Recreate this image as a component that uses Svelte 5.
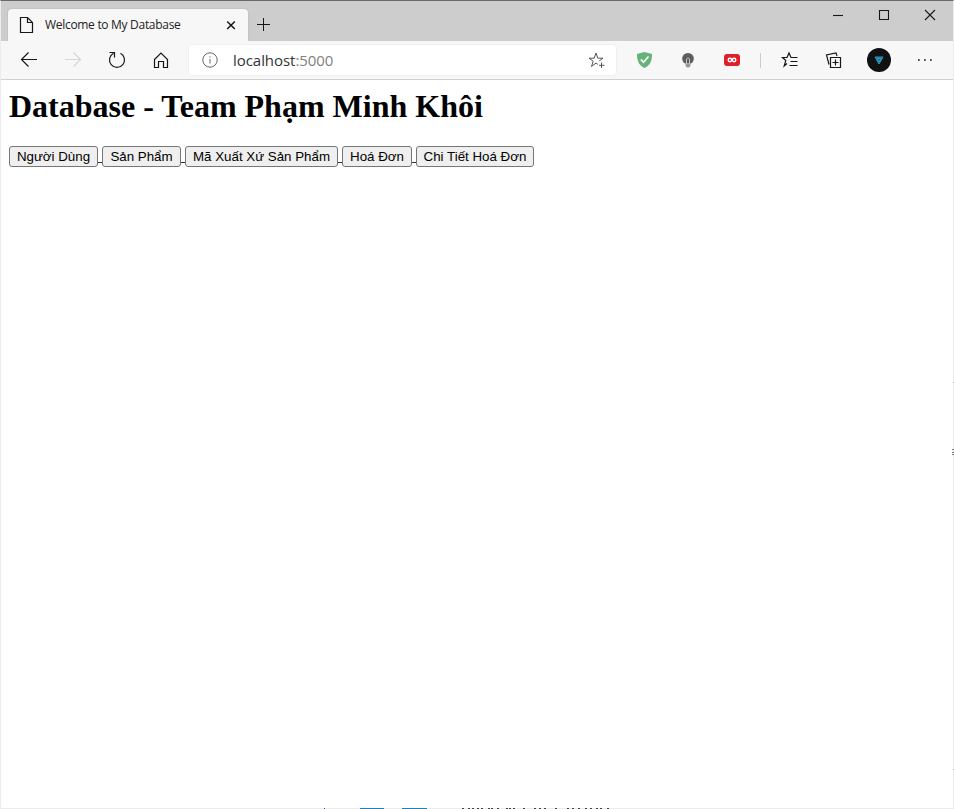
<script>
  const links = [
    { label: 'Người Dùng', width: 89 },
    { label: 'Sản Phẩm', width: 79 },
    { label: 'Mã Xuất Xứ Sản Phẩm', width: 153 },
    { label: 'Hoá Đơn', width: 70 },
    { label: 'Chi Tiết Hoá Đơn', width: 118 }
  ];
  const dashes = [152, 158, 162, 167, 171, 178, 181, 187, 196, 199, 203, 213, 224, 229, 234, 245, 257, 262, 268, 275, 280, 286, 290, 297];
</script>

<div class="window">
  <header class="titlebar">
    <div class="tab">
      <svg class="doc" width="16" height="18" viewBox="0 0 16 18"><path d="M2.5 1.5H9.5L14.5 6.5V16.5H2.5ZM9.5 1.5V6.5H14.5" /></svg>
      <span class="tabname">Welcome to My Database</span>
      <svg class="tabclose" width="10" height="10" viewBox="0 0 10 10"><path d="M1.200 1.500L8.800 9M8.800 1.500L1.200 9" /></svg>
    </div>
    <svg class="plus" width="14" height="14" viewBox="0 0 14 14"><path d="M6.500 0V13M0 6.500H13" /></svg>
    <div class="controls">
      <svg width="46" height="30" viewBox="0 0 46 30"><path d="M18 14.5H28" /></svg>
      <svg width="46" height="30" viewBox="0 0 46 30"><path d="M18.500 9.500H27.500V18.500H18.500Z" /></svg>
      <svg width="46" height="30" viewBox="0 0 46 30"><path d="M18 9L28 19M28 9L18 19" /></svg>
    </div>
  </header>

  <nav class="toolbar">
    <svg class="cell" width="44" height="38" viewBox="0 0 44 38"><path d="M30 18.500H14.500M21.500 11.500L14.500 18.500L21.500 25.500" /></svg>
    <svg class="cell faded" width="44" height="38" viewBox="0 0 44 38"><path d="M14 18.500H29.500M22.500 11.500L29.500 18.500L22.500 25.500" /></svg>
    <svg class="cell" width="44" height="38" viewBox="0 0 44 38"><path d="M25.500 12.300A7.500 7.500 0 1 1 18.500 12.300M14.500 11.500H19.500V16.500" /></svg>
    <svg class="cell" width="44" height="38" viewBox="0 0 44 38"><path d="M15.500 18.500L22 12L28.500 18.500V26.500H24.500V20.500H19.500V26.500H15.500Z" /></svg>
    <div class="address">
      <svg class="info" width="16" height="16" viewBox="0 0 16 16"><circle cx="8" cy="8" r="7.200" /><path d="M8 7V11.500M8 4.300V5.500" /></svg>
      <span class="url">localhost<span>:5000</span></span>
      <svg class="star" width="18" height="18" viewBox="0 0 18 18"><path d="M11 13.500L9 12L4.500 15.500L6.200 10.200L2 7.200H7.200L9 2L10.800 7.200H16L12.200 10M14.500 11.500V17M12 14.300H17.500" /></svg>
    </div>
    <svg class="cell ext" width="44" height="38" viewBox="0 0 44 38"><path fill="#67b279" d="M22.500 11L30 13C30.100 20 28 24.500 22.500 27C17 24.500 14.900 20 15 13Z" /><path stroke="#fff" stroke-width="1.700" d="M18.800 18.500L21.500 21.200L26.500 15.500" /></svg>
    <svg class="cell ext" width="44" height="38" viewBox="0 0 44 38"><path fill="#5d5d5d" d="M19 22.500C14.700 20.500 15 12.200 22 12C29 12.200 29.300 20.500 25 22.500Z" /><path fill="#999" d="M19.500 22H24.500V25L23 26.500H21L19.500 25Z" /><path stroke="#ddd" stroke-width=".8" d="M20.500 23V18Q22 15.500 23.500 18V23" /></svg>
    <svg class="cell ext" width="44" height="38" viewBox="0 0 44 38"><rect x="14" y="13" width="16" height="12" rx="3" fill="#dc202d" /><circle cx="19.900" cy="19" r="1.700" stroke="#fff" stroke-width="1.400" /><circle cx="24.100" cy="19" r="1.700" stroke="#fff" stroke-width="1.400" /></svg>
    <i class="divider"></i>
    <svg class="cell" width="44" height="38" viewBox="0 0 44 38"><path d="M19 22.500L16.200 25L17.800 19.500L14.500 16.500H19L21 12L23 16.500H29.500M22.500 20.500H29.500M21.500 24.500H29.500" /></svg>
    <svg class="cell" width="44" height="38" viewBox="0 0 44 38"><path d="M18.500 16.500H28.500V26.500H18.500ZM23.500 18.500V24.500M20.500 21.500H26.500M17 23.500L14.500 14L24 12L25 15" /></svg>
    <svg class="cell" width="46" height="38" viewBox="0 0 46 38"><circle cx="23" cy="19" r="12" fill="#101113" stroke="none" /><path fill="#25647c" stroke="#2b9bc0" stroke-width="1" d="M19 16H27L23 23ZM21 17.500H25L23 21Z" /></svg>
    <svg class="cell" width="46" height="38" viewBox="0 0 46 38"><path stroke-width="1.700" d="M16 19H17.700M22 19H23.700M28 19H29.700" /></svg>
  </nav>

  <main>
    <h1>Database - Team Phạm Minh Khôi</h1>
    <div class="links">
      {#each links as link, i}
        {#if i > 0}<i class="join"></i>{/if}
        <button style="width: {link.width}px"><span>{link.label}</span></button>
      {/each}
    </div>
  </main>

  <svg class="bottomedge" width="320" height="1" viewBox="0 0 320 1">
    <path stroke="#1f7fb5" stroke-width="2" d="M50 1H74M92 1H117" /><path stroke="#357" d="M14 .5H15" />
    {#each dashes as x}<path stroke="#444" stroke-width="2" d="M{x} 1h2" />{/each}
  </svg>
  <svg class="rightedge" width="2" height="391" viewBox="0 0 2 391"><path stroke="#a8c5cd" stroke-width="1" d="M1 3.500H2M1 390.500H2" /><path stroke="#777" stroke-width="1" d="M0 70.500H2M0 73.500H2M0 75.500H2" /></svg>
</div>

<style>
  :global(body) { margin: 0; overflow: hidden; }
  .window { box-sizing: border-box; position: relative; width: 954px; height: 809px; background: #fff; border: 1px solid #ececec; border-top: 1px solid #6b686c; display: flex; flex-direction: column; }
  svg { display: block; flex: none; fill: none; stroke: #171717; stroke-width: 1.2; }
  .titlebar { height: 40px; flex: none; background: #cdcdcd; display: flex; align-items: flex-start; }
  .tab { box-sizing: border-box; width: 240px; height: 32px; margin: 8px 0 0 7px; background: #f7f7f7; border-radius: 4px 4px 0 0; display: flex; align-items: center; padding-left: 10px; box-shadow: 0 0 2px #aaa; }
  .tabname { font: 12px/16px "Open Sans", "Noto Sans", sans-serif; color: #222; margin: 0 0 1px 11px; width: 137px; white-space: nowrap; letter-spacing: -.3px; }
  .tabclose { margin-left: 44px; stroke-width: 1.5; }
  .plus { margin: 17px 0 0 9px; stroke-width: 1; }
  .controls { display: flex; margin-left: auto; }
  .controls svg { stroke-width: 1.1; }
  .toolbar { position: relative; box-sizing: border-box; height: 39px; flex: none; background: #f7f7f7; border-bottom: 1px solid #d0d0d0; display: flex; padding-left: 6px; }
  .faded { stroke: #d5d5d5; }
  svg.ext { stroke: none; }
  .address { box-sizing: border-box; width: 429px; height: 32px; margin: 3px 5px 0 5px; background: #fff; border: 1px solid #f0f0f0; border-radius: 4px; display: flex; align-items: center; padding-left: 13px; }
  .info { stroke: #666; stroke-width: 1; }
  .url { font: 15px "Open Sans", "Noto Sans", sans-serif; color: #333; margin-left: 15px; white-space: nowrap; letter-spacing: -.05px; }
  .url span { color: #808080; }
  .star { margin: 0 11px 0 auto; stroke: #555; stroke-width: 1; }
  .divider { width: 1px; height: 15px; background: #ccc; margin: 12px 7px 0 6px; }
  main { padding: 8px; }
  h1 { margin: 0; font: bold 32px/37px "Liberation Serif", serif; color: #000; white-space: nowrap; }
  .links { display: flex; margin-top: 21px; }
  button { box-sizing: border-box; height: 21px; padding: 0; flex: none; background: #efefef; border: 1px solid #767676; border-radius: 3px; color: #000; font: 13.333px "Liberation Sans", sans-serif; white-space: nowrap; display: flex; align-items: center; justify-content: center; }
  .join { width: 4px; height: 1px; background: #333; margin-top: 16px; }
  .bottomedge { position: absolute; left: 309px; bottom: -1px; }
  .rightedge { position: absolute; right: -1px; top: 378px; }
</style>
